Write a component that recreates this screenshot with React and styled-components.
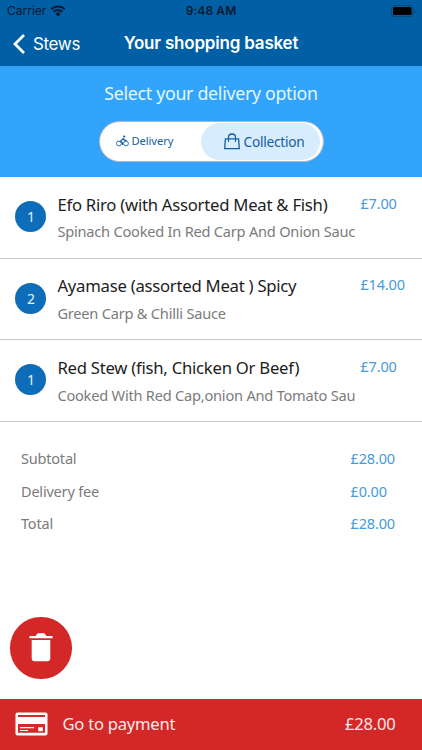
import React from "react";
import styled, { createGlobalStyle } from "styled-components";

const GlobalStyle = createGlobalStyle`
  * { box-sizing: border-box; }
  body { margin: 0; background: #fff; }
`;

const Screen = styled.div`
  width: 422px;
  height: 750px;
  display: flex;
  flex-direction: column;
  overflow: hidden;
  background: #fff;
  font-family: "Noto Sans", "Open Sans", sans-serif;
  white-space: nowrap;
`;

const Header = styled.header`
  height: 66px;
  flex: none;
  background: #005fa5;
  font-family: Inter, sans-serif;
`;

const StatusBar = styled.div`
  height: 22px;
  display: grid;
  grid-template-columns: 1fr auto 1fr;
  align-items: center;
  padding: 0 6px 0 7px;
  color: #051a2e;
  font-size: 12px;
  line-height: 22px;
`;

const Carrier = styled.div`
  display: flex;
  align-items: center;
  gap: 4px;
  letter-spacing: 0;
`;

const Clock = styled.div`
  font-weight: 600;
  letter-spacing: 0.1px;
  margin-right: 1px;
`;

const BatterySlot = styled.div`
  display: flex;
  justify-content: flex-end;
`;

const NavBar = styled.nav`
  height: 44px;
  display: grid;
  grid-template-columns: 1fr auto 1fr;
  align-items: center;
  padding: 0 12px;
  color: #fff;
`;

const BackLink = styled.div`
  display: flex;
  align-items: center;
  gap: 8px;
  margin-top: -1px;
  font-size: 17px;
  letter-spacing: -0.35px;
`;

const PageTitle = styled.h1`
  margin: -2px 0 0;
  font-size: 17px;
  font-weight: 600;
  letter-spacing: -0.2px;
`;

const OptionPanel = styled.section`
  height: 111px;
  flex: none;
  display: flex;
  flex-direction: column;
  align-items: center;
  background: #33a4fc;
`;

const OptionTitle = styled.h2`
  margin: 13px 0;
  height: 29px;
  line-height: 29px;
  font-size: 17.8px;
  letter-spacing: -0.3px;
  font-weight: 400;
  color: #e6f6ff;
`;

const Toggle = styled.div`
  width: 225px;
  height: 41px;
  padding: 1px 3px 1px 1px;
  display: grid;
  grid-template-columns: 100px 119px;
  align-items: center;
  border: 1px solid #a9b8c9;
  border-radius: 21px;
  background: #fff;
  color: #15609f;
`;

const ToggleOption = styled.div`
  height: 37px;
  display: flex;
  align-items: center;
  gap: ${(p) => (p.$active ? "4px" : "3px")};
  padding: ${(p) => (p.$active ? "0 0 0 23px" : "0 0 2px 15px")};
  border-radius: 19px;
  background: ${(p) => (p.$active ? "#d7ecfc" : "transparent")};
  font-size: ${(p) => (p.$active ? "13.7px" : "11.2px")};
  letter-spacing: ${(p) => (p.$active ? "-0.25px" : "-0.1px")};
`;

const ItemRow = styled.article`
  height: 81.7px;
  flex: none;
  display: grid;
  grid-template-columns: 42px 303px 1fr;
  padding-left: 15.4px;
  border-bottom: 1.4px solid #c8c8c8;
`;

const Quantity = styled.div`
  width: 31px;
  height: 31px;
  margin-top: 24px;
  border-radius: 50%;
  background: #0e6db8;
  color: #e4f3ff;
  font-size: 14px;
  line-height: 31px;
  text-align: center;
`;

const ItemName = styled.h3`
  margin: 15.6px 0 0;
  height: 24px;
  line-height: 24px;
  font-size: 16.7px;
  letter-spacing: -0.25px;
  font-weight: 400;
  color: #1d1d1d;
`;

const ItemDescription = styled.p`
  margin: 3.6px 0 0;
  height: 22px;
  line-height: 22px;
  font-size: 14.6px;
  letter-spacing: -0.22px;
  color: #7b7b7b;
`;

const Price = styled.div`
  font-size: 14.5px;
  letter-spacing: -0.16px;
  line-height: 20px;
  color: #459bdd;
`;

const ItemPrice = styled(Price)`
  margin-top: 15.6px;
`;

const Totals = styled.section`
  flex: none;
  padding: 20px 21px 0;
  display: grid;
  grid-template-columns: 329.5px 1fr;
  grid-auto-rows: 32.5px;
  align-items: center;
`;

const TotalLabel = styled.div`
  font-size: 14.5px;
  letter-spacing: -0.2px;
  line-height: 20px;
  color: #7b7b7b;
`;

const Actions = styled.div`
  flex: 1;
  display: flex;
  align-items: flex-end;
  padding: 0 0 20px 10.4px;
`;

const DeleteButton = styled.button`
  width: 61.2px;
  height: 61.2px;
  padding: 0;
  display: flex;
  align-items: center;
  justify-content: center;
  border: 0;
  border-radius: 50%;
  background: #d32728;
`;

const PaymentBar = styled.footer`
  height: 51.5px;
  flex: none;
  display: grid;
  grid-template-columns: 47.5px 282.5px 1fr;
  align-items: center;
  padding: 0 0 1px 15px;
  background: #d32728;
  color: #ffe9e9;
  font-size: 16.6px;
  letter-spacing: -0.24px;
`;

const Icon = styled.svg`
  display: block;
  flex: none;
`;

const WifiIcon = () => (
  <Icon width="16" height="12" viewBox="0 0 15 12" fill="none" stroke="currentColor" strokeWidth="2.2">
    <path d="M.8 4.2a9.6 9.6 0 0 1 13.4 0M3.2 6.9a6.1 6.1 0 0 1 8.6 0" />
    <path d="M7.5 11.4 5 8.9a3.5 3.5 0 0 1 5 0z" fill="currentColor" stroke="none" />
  </Icon>
);

const BatteryIcon = () => (
  <Icon width="25" height="12" viewBox="0 0 25 12">
    <rect x=".5" y=".5" width="21.5" height="11" rx="3" fill="none" stroke="#064878" />
    <rect x="2" y="2" width="18.5" height="8" rx="1.6" fill="#000" />
    <path d="M23.3 4.2c1.3.5 1.3 3.1 0 3.6z" fill="#063e69" />
  </Icon>
);

const BackIcon = () => (
  <Icon width="13" height="20" viewBox="0 0 13 20" fill="none" stroke="currentColor" strokeWidth="2.8">
    <path d="M12 1 3 10l9 9" />
  </Icon>
);

const BikeIcon = () => (
  <Icon width="13" height="12" viewBox="0 0 13 12" fill="none" stroke="currentColor" strokeWidth=".9">
    <circle cx="2.9" cy="8.5" r="2.4" />
    <circle cx="10" cy="8.5" r="2.4" />
    <path d="M6.5 10V7.8L4.5 6.2 7.2 3.6l1.5 1.7h2" strokeWidth="1.3" />
    <circle cx="8.2" cy="1.6" r="1.1" fill="currentColor" stroke="none" />
  </Icon>
);

const BagIcon = () => (
  <Icon width="16" height="17" viewBox="0 0 16 17" fill="none" stroke="currentColor" strokeWidth="1.3">
    <path d="M1.4 5.9h13.2l.7 9.8H.7zM4.5 8.8V4.4a3.5 3.4 0 0 1 7 0v4.4" />
  </Icon>
);

const TrashIcon = () => (
  <Icon width="24" height="29" viewBox="0 0 24 29" fill="#fff">
    <path d="M.5 2.9h6.2l1-1.7Q8.2.3 9.3.3h5.4q1.1 0 1.6.9l1 1.7h6.2v2.4H.5zM2.7 7h18.6v18.2q0 3-3 3H5.7q-3 0-3-3z" />
  </Icon>
);

const CardIcon = () => (
  <Icon width="33" height="24" viewBox="0 0 33 24">
    <rect x=".5" y=".5" width="32" height="23" rx="2" fill="#fff" />
    <path d="M3 2.9h27v2.2H3zM3 12h27v8.8H3z" fill="#d32728" />
    <path d="M5 15.1h14v1.1H5zM5 17.9h8V19H5zM23.2 15.2h4.6v4h-4.6z" fill="#fff" />
  </Icon>
);

const items = [
  { quantity: 1, name: "Efo Riro (with Assorted Meat & Fish)", description: "Spinach Cooked In Red Carp And Onion Sauc", price: "£7.00" },
  { quantity: 2, name: "Ayamase (assorted Meat ) Spicy", description: "Green Carp & Chilli Sauce", price: "£14.00" },
  { quantity: 1, name: "Red Stew (fish, Chicken Or Beef)", description: "Cooked With Red Cap,onion And Tomato Sau", price: "£7.00" },
];

const totals = [
  ["Subtotal", "£28.00"],
  ["Delivery fee", "£0.00"],
  ["Total", "£28.00"],
];

export default function App() {
  return (
    <Screen>
      <GlobalStyle />
      <Header>
        <StatusBar>
          <Carrier>Carrier <WifiIcon /></Carrier>
          <Clock>9:48 AM</Clock>
          <BatterySlot><BatteryIcon /></BatterySlot>
        </StatusBar>
        <NavBar>
          <BackLink><BackIcon />Stews</BackLink>
          <PageTitle>Your shopping basket</PageTitle>
        </NavBar>
      </Header>
      <OptionPanel>
        <OptionTitle>Select your delivery option</OptionTitle>
        <Toggle>
          <ToggleOption><BikeIcon />Delivery</ToggleOption>
          <ToggleOption $active><BagIcon />Collection</ToggleOption>
        </Toggle>
      </OptionPanel>
      {items.map((item) => (
        <ItemRow key={item.name}>
          <Quantity>{item.quantity}</Quantity>
          <div>
            <ItemName>{item.name}</ItemName>
            <ItemDescription>{item.description}</ItemDescription>
          </div>
          <ItemPrice>{item.price}</ItemPrice>
        </ItemRow>
      ))}
      <Totals>
        {totals.map(([label, amount]) => (
          <React.Fragment key={label}>
            <TotalLabel>{label}</TotalLabel>
            <Price>{amount}</Price>
          </React.Fragment>
        ))}
      </Totals>
      <Actions>
        <DeleteButton aria-label="Empty basket"><TrashIcon /></DeleteButton>
      </Actions>
      <PaymentBar>
        <CardIcon />
        <span>Go to payment</span>
        <span>£28.00</span>
      </PaymentBar>
    </Screen>
  );
}
